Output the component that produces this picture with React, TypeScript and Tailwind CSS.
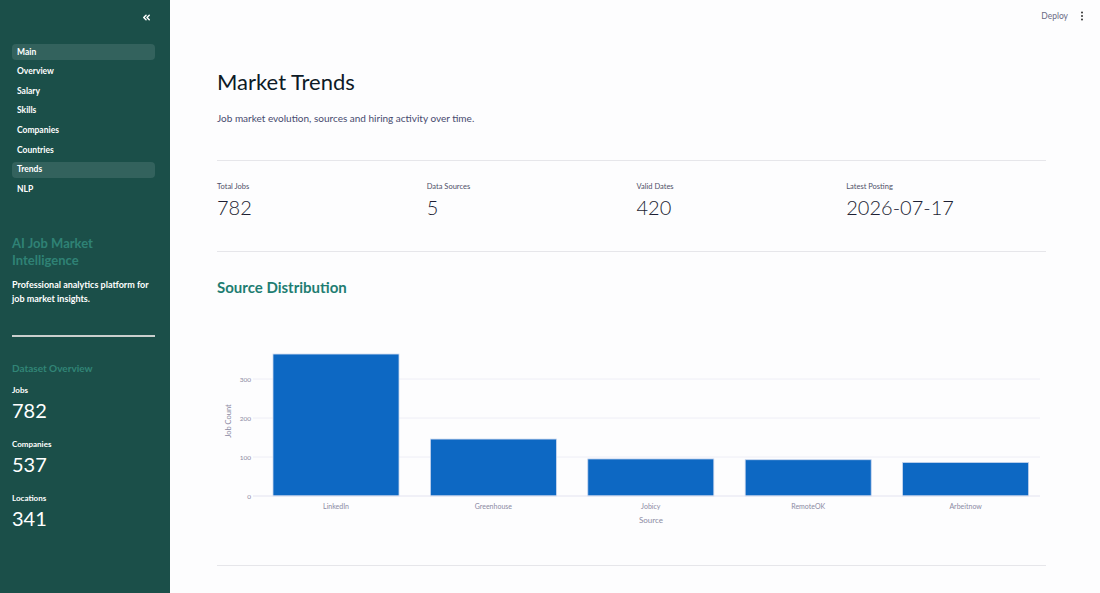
import React from "react";

const navItems = [
  { label: "Main", active: true },
  { label: "Overview" },
  { label: "Salary" },
  { label: "Skills" },
  { label: "Companies" },
  { label: "Countries" },
  { label: "Trends", active: true },
  { label: "NLP" },
];

const bars = [
  { name: "LinkedIn", value: 364 },
  { name: "Greenhouse", value: 146 },
  { name: "Jobicy", value: 95 },
  { name: "RemoteOK", value: 93 },
  { name: "Arbeitnow", value: 86 },
];

const FONT = "Lato, 'Liberation Sans', sans-serif";

function Chart() {
  // svg origin at page x=217, y=330
  const ox = 217;
  const oy = 330;
  const plotLeft = 253 - ox;
  const plotRight = 1040 - ox;
  const zeroY = 496 - oy;
  const perUnit = 0.39;
  const barW = 126;
  return (
    <svg width={829} height={205} className="block">
      {[100, 200, 300].map((t) => (
        <line
          key={t}
          x1={plotLeft}
          x2={plotRight}
          y1={zeroY - t * perUnit}
          y2={zeroY - t * perUnit}
          stroke="#eeeef6"
          strokeWidth={1}
        />
      ))}
      {bars.map((b, i) => {
        const cx = 336 - ox + 157.4 * i;
        const h = b.value * perUnit;
        return (
          <g key={b.name}>
            <rect
              x={cx - barW / 2}
              y={zeroY - h}
              width={barW}
              height={h}
              fill="#0d68c3"
              stroke="#c9d6ee"
              strokeWidth={0.8}
            />
            <text x={cx} y={zeroY + 12.5} textAnchor="middle" fontSize={7} fill="#8b8aa3" fontFamily={FONT}>
              {b.name}
            </text>
          </g>
        );
      })}
      <line x1={plotLeft} x2={plotRight} y1={zeroY} y2={zeroY} stroke="#e3e3f0" strokeWidth={1} />
      {[0, 100, 200, 300].map((t) => (
        <text
          key={t}
          x={plotLeft - 2}
          y={zeroY - t * perUnit + 2.5}
          textAnchor="end"
          fontSize={6.5}
          fill="#8b8aa3"
          fontFamily={FONT}
        >
          {t}
        </text>
      ))}
      <text x={651 - ox} y={zeroY + 27} textAnchor="middle" fontSize={8} fill="#8b8aa3" fontFamily={FONT}>
        Source
      </text>
      <text
        transform={`translate(${231 - ox}, ${421 - oy}) rotate(-90)`}
        textAnchor="middle"
        fontSize={7.5}
        fill="#8b8aa3"
        fontFamily={FONT}
      >
        Job Count
      </text>
    </svg>
  );
}

export default function App() {
  return (
    <div
      className="flex h-[593px] w-[1100px] overflow-hidden bg-white"
      style={{ fontFamily: "Lato, 'Source Sans Pro', 'Open Sans', sans-serif" }}
    >
      {/* Sidebar */}
      <aside className="flex w-[170px] shrink-0 flex-col bg-[#1b4f49] pl-[12px] pr-[15px]">
        <div className="flex h-[32px] items-center justify-end pr-[3px] pt-[2px] text-white">
          <svg width="11" height="11" viewBox="0 0 24 24" fill="none" stroke="white" strokeWidth="3.2" strokeLinecap="round" strokeLinejoin="round">
            <path d="M11 17l-5-5 5-5" />
            <path d="M18 17l-5-5 5-5" />
          </svg>
        </div>
        <nav className="mt-[12px] flex flex-col gap-[3.6px]">
          {navItems.map((n) => (
            <div
              key={n.label}
              className={`flex h-[16px] items-center rounded-[4px] px-[5px] text-[8.5px] font-bold text-white ${
                n.active ? "bg-[#33625d]" : ""
              }`}
            >
              {n.label}
            </div>
          ))}
        </nav>
        <div className="mt-[38px] text-[13px] font-bold leading-[17px] text-[#2f8275]">
          AI Job Market
          <br />
          Intelligence
        </div>
        <div className="mt-[9px] text-[9px] font-bold leading-[14px] text-white">
          Professional analytics platform for
          <br />
          job market insights.
        </div>
        <div className="mt-[29px] h-[2px] w-full bg-[#c9cfcd]" />
        <div className="mt-[24px] text-[10px] font-bold text-[#318576]">Dataset Overview</div>
        {[
          ["Jobs", "782"],
          ["Companies", "537"],
          ["Locations", "341"],
        ].map(([l, v], i) => (
          <div key={l} className={i === 0 ? "mt-[9px]" : "mt-[17px]"}>
            <div className="text-[8px] font-bold leading-[10px] text-white">{l}</div>
            <div className="mt-[3px] text-[20px] leading-[24px] text-white">{v}</div>
          </div>
        ))}
      </aside>

      {/* Main */}
      <main className="relative flex-1 bg-[#fdfdfe]">
        <div className="absolute right-[16px] top-[10px] flex items-center gap-[12px] text-[8.5px] text-[#6b6a85]">
          <span>Deploy</span>
          <svg width="4" height="10" viewBox="0 0 4 10">
            <circle cx="2" cy="1.5" r="1" fill="#333" />
            <circle cx="2" cy="5" r="1" fill="#333" />
            <circle cx="2" cy="8.5" r="1" fill="#333" />
          </svg>
        </div>
        <div className="ml-[47px] w-[829px]">
          <h1 className="mt-[66px] text-[22px] font-normal leading-[32px] text-[#0d1a26]">Market Trends</h1>
          <p className="mt-[13px] text-[10px] text-[#474a6e]">
            Job market evolution, sources and hiring activity over time.
          </p>
          <div className="mt-[34px] h-px w-full bg-[#e6e6ea]" />
          <div className="mt-[21px] grid grid-cols-4 gap-[10px]">
            {[
              ["Total Jobs", "782"],
              ["Data Sources", "5"],
              ["Valid Dates", "420"],
              ["Latest Posting", "2026-07-17"],
            ].map(([l, v]) => (
              <div key={l}>
                <div className="text-[7.5px] leading-[10px] text-[#4e5068]">{l}</div>
                <div className="mt-[1px] text-[20px] font-light leading-[28px] text-[#1c1e33]">{v}</div>
              </div>
            ))}
          </div>
          <div className="mt-[30px] h-px w-full bg-[#e6e6ea]" />
          <h2 className="mt-[25px] text-[15px] font-bold leading-[20px] text-[#1f7d72]">Source Distribution</h2>
          <div className="mt-[33px]">
            <Chart />
          </div>
          <div className="mt-[30px] h-px w-full bg-[#e6e6ea]" />
        </div>
      </main>
    </div>
  );
}
